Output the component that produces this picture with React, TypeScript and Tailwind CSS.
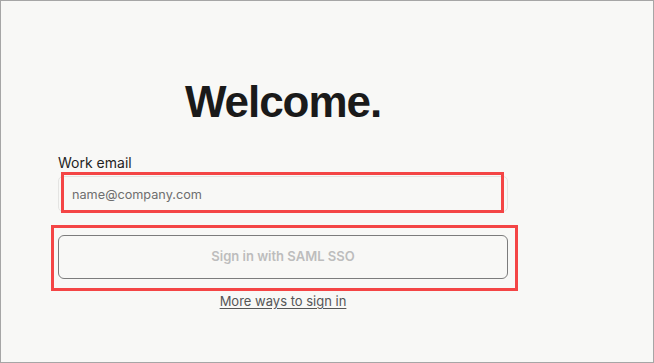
import React from "react";

const inter = { fontFamily: "Inter, 'Noto Sans', sans-serif" };

const App: React.FC = () => {
  return (
    <div className="relative w-[654px] h-[363px] overflow-hidden border border-[#a6a6a6] bg-[#f8f8f6]">
      <div className="ml-[57px] w-[450px] pt-[77px] flex flex-col" style={inter}>
        <h1
          className="text-center text-[44px] leading-[48px] font-bold tracking-[-0.024em] text-[#1a1a1a]"
          style={{ fontFamily: "'Liberation Sans', Arial, sans-serif" }}
        >
          Welcome.
        </h1>

        <label htmlFor="email" className="mt-[27px] text-[14px] leading-[20px] text-[#1f1f1f]">
          Work email
        </label>
        <input
          id="email"
          type="email"
          placeholder="name@company.com"
          className="mt-[3px] h-[36px] w-full rounded-[5px] border border-[#e4e4e2] bg-[#f8f8f6] px-[13px] text-[12.7px] text-[#1f1f1f] placeholder:text-[#6e6e6e] outline-none"
        />

        <button
          type="button"
          className="mt-[23px] h-[44px] w-full rounded-[6px] border border-[#7c7c7c] text-[13px] font-semibold text-[#bdbdbd]"
        >
          Sign in with SAML SSO
        </button>

        <a href="#" className="mt-[13px] self-center text-[13px] leading-[18px] text-[#555] underline underline-offset-2">
          More ways to sign in
        </a>
      </div>

      {/* annotation boxes */}
      <div className="absolute left-[60px] top-[171px] w-[443px] h-[41px] border-[3px] border-[#f44545]" />
      <div className="absolute left-[50px] top-[224px] w-[467px] h-[66px] border-[3px] border-[#f44545]" />
    </div>
  );
};

export default App;
